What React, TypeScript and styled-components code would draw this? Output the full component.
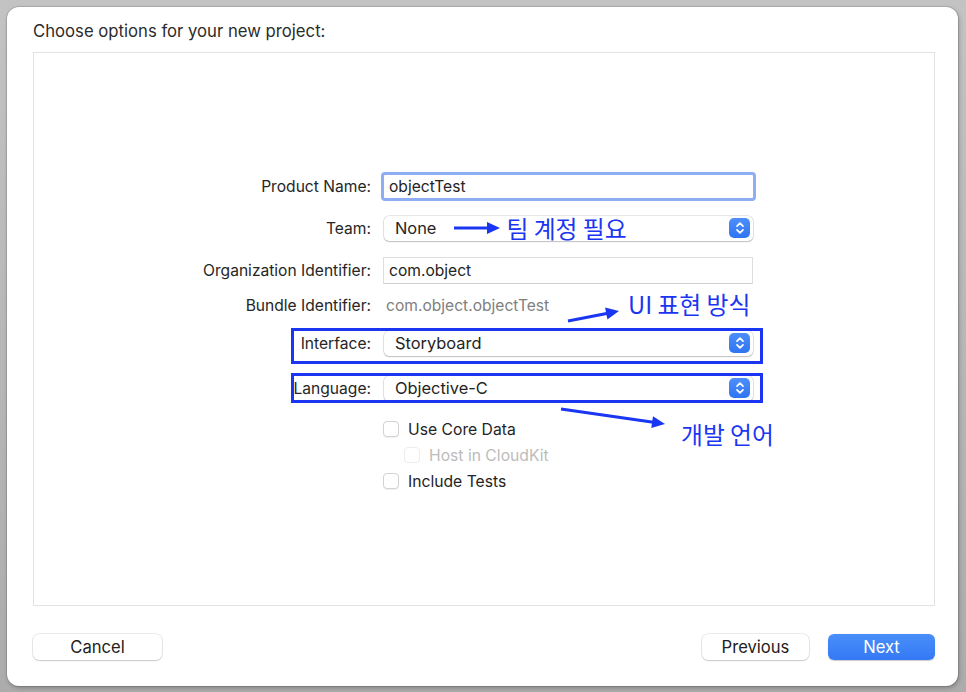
import React, { FC, ReactNode } from "react";
import styled, { createGlobalStyle } from "styled-components";

const colors = {
  backdrop: "#b9b9b9",
  window: "#ffffff",
  panelBorder: "#e3e3e3",
  text: "#242424",
  muted: "#808080",
  disabled: "#bcbcbc",
  accent: "#3d82f6",
  focus: "#8fadf2",
  note: "#1a36f2",
};

const GlobalStyle = createGlobalStyle`
  html, body {
    margin: 0;
    padding: 0;
    background: ${colors.backdrop};
  }
  body {
    font-family: Inter, "Liberation Sans", "Noto Sans CJK KR", sans-serif;
    color: ${colors.text};
    -webkit-font-smoothing: antialiased;
  }
`;

const Backdrop = styled.div`
  width: 966px;
  height: 692px;
  padding: 7px 8px 6px 7px;
  box-sizing: border-box;
  background: linear-gradient(#c3c3c3, #acacac);
`;

const Window = styled.div`
  width: 951px;
  height: 679px;
  box-sizing: border-box;
  background: ${colors.window};
  border-radius: 12px;
  box-shadow: 0 0 0 1px rgb(0 0 0 / 10%), 1px 2px 4px rgb(0 0 0 / 25%);
  padding: 14px 23px 0 26px;
  display: flex;
  flex-direction: column;
`;

const Title = styled.div`
  font-size: 16.7px;
  line-height: 20px;
  color: #2b2b2b;
  margin-bottom: 11px;
`;

const Panel = styled.div`
  height: 554px;
  box-sizing: border-box;
  border: 1px solid ${colors.panelBorder};
  padding-top: 117px;
`;

const Row = styled.div<{ $h: number; $mt?: number; $pb?: number; $boxed?: boolean }>`
  position: relative;
  display: grid;
  grid-template-columns: 337px 372px;
  column-gap: 12px;
  align-items: center;
  height: ${(p) => p.$h}px;
  margin-top: ${(p) => p.$mt ?? 0}px;
  padding-bottom: ${(p) => p.$pb ?? 0}px;
  box-sizing: border-box;

  &::before {
    content: "";
    display: ${(p) => (p.$boxed ? "block" : "none")};
    position: absolute;
    left: 257px;
    top: 0;
    width: 472px;
    height: 100%;
    box-sizing: border-box;
    border: 3px solid ${colors.note};
  }
`;

const Label = styled.div`
  text-align: right;
  font-size: 15.6px;
  color: #262626;
`;

const FocusField = styled.div`
  height: 29px;
  margin-left: -2px;
  width: 375px;
  box-sizing: border-box;
  border: 3px solid ${colors.focus};
  border-radius: 4px;
  background: #fff;
  display: flex;
  align-items: center;
  padding-left: 5px;
  font-size: 15.6px;
`;

const Field = styled.div`
  height: 27px;
  width: 370px;
  box-sizing: border-box;
  border: 1px solid #dedede;
  border-bottom-color: #cfcfcf;
  background: #fff;
  display: flex;
  align-items: center;
  padding-left: 5px;
  font-size: 15.6px;
`;

const Value = styled.div<{ $muted?: boolean }>`
  font-size: 15.6px;
  color: ${(p) => (p.$muted ? colors.muted : colors.text)};
  padding-left: 3px;
  display: flex;
  align-items: center;
`;

const PopupBox = styled.div`
  height: 25px;
  width: 369px;
  box-sizing: border-box;
  margin-left: 1px;
  border-radius: 5px;
  background: #fff;
  box-shadow: 0 0 0 0.5px rgb(0 0 0 / 18%), 0 1px 1.5px rgb(0 0 0 / 18%);
  display: flex;
  align-items: center;
  padding: 0 3px 0 11px;
  font-size: 16.4px;
`;

const PopupText = styled.div`
  flex: 1;
  display: flex;
  align-items: center;
  white-space: nowrap;
`;

const Stepper = styled.div`
  width: 21px;
  height: 20px;
  border-radius: 5px;
  background: linear-gradient(#4d8ff8, #2f74f2);
  display: flex;
  align-items: center;
  justify-content: center;
`;

const Popup: FC<{ children: ReactNode }> = ({ children }) => (
  <PopupBox>
    <PopupText>{children}</PopupText>
    <Stepper>
      <svg width="10" height="14" viewBox="0 0 10 14">
        <path
          d="M2 5.2 L5 2.2 L8 5.2 M2 8.8 L5 11.8 L8 8.8"
          fill="none"
          stroke="#fff"
          strokeWidth="1.7"
          strokeLinecap="round"
          strokeLinejoin="round"
        />
      </svg>
    </Stepper>
  </PopupBox>
);

const Check = styled.div<{ $indent?: number; $disabled?: boolean }>`
  display: flex;
  align-items: center;
  gap: 9px;
  margin-left: ${(p) => p.$indent ?? 0}px;
  font-size: 15.7px;
  color: ${(p) => (p.$disabled ? colors.disabled : colors.text)};

  span {
    width: 16px;
    height: 16px;
    box-sizing: border-box;
    border-radius: 4px;
    background: #fff;
    border: 1px solid ${(p) => (p.$disabled ? "#ececec" : "#d2d2d2")};
    box-shadow: ${(p) => (p.$disabled ? "none" : "0 1px 1px rgb(0 0 0 / 6%)")};
  }
`;

const Note = styled.span`
  font-family: "Noto Sans CJK KR", sans-serif;
  font-size: 23.8px;
  line-height: 28px;
  color: ${colors.note};
  white-space: nowrap;
`;

const FloatingNote = styled(Note)<{ $left: number; $top: number }>`
  position: absolute;
  left: ${(p) => p.$left}px;
  top: ${(p) => p.$top}px;
`;

const FloatingArrow = styled.svg<{ $left: number; $top: number }>`
  position: absolute;
  left: ${(p) => p.$left}px;
  top: ${(p) => p.$top}px;
  overflow: visible;
`;

const InlineArrow = styled.svg`
  margin: 0 6px 0 18px;
`;

const Footer = styled.div`
  display: flex;
  align-items: center;
  padding-top: 28px;
  gap: 19px;
`;

const Button = styled.div<{ $primary?: boolean; $w: number }>`
  width: ${(p) => p.$w}px;
  height: 26px;
  box-sizing: border-box;
  border-radius: 6px;
  display: flex;
  align-items: center;
  justify-content: center;
  font-size: 16.6px;
  color: ${(p) => (p.$primary ? "#fff" : "#222")};
  background: ${(p) =>
    p.$primary ? "linear-gradient(#4a8ef8, #3479f5)" : "#fff"};
  box-shadow: ${(p) =>
    p.$primary
      ? "0 0.5px 1px rgb(0 0 0 / 20%)"
      : "0 0 0 0.5px rgb(0 0 0 / 15%), 0 1px 1.5px rgb(0 0 0 / 15%)"};
`;

const Spacer = styled.div`
  flex: 1;
`;

const arrowHead = (x: number, y: number, angle: number) => {
  const len = 13;
  const half = 6;
  const cos = Math.cos(angle);
  const sin = Math.sin(angle);
  const bx = x - len * cos;
  const by = y - len * sin;
  return `${x},${y} ${bx - half * sin},${by + half * cos} ${bx + half * sin},${by - half * cos}`;
};

const Arrow: FC<{ x1: number; y1: number; x2: number; y2: number }> = ({ x1, y1, x2, y2 }) => {
  const a = Math.atan2(y2 - y1, x2 - x1);
  return (
    <>
      <line
        x1={x1}
        y1={y1}
        x2={x2 - 10 * Math.cos(a)}
        y2={y2 - 10 * Math.sin(a)}
        stroke={colors.note}
        strokeWidth="3"
      />
      <polygon points={arrowHead(x2, y2, a)} fill={colors.note} />
    </>
  );
};

const App: FC = () => (
  <>
    <GlobalStyle />
    <Backdrop>
      <Window>
        <Title>Choose options for your new project:</Title>
        <Panel>
          <Row $h={32}>
            <Label>Product Name:</Label>
            <FocusField>objectTest</FocusField>
          </Row>
          <Row $h={32} $mt={10}>
            <Label>Team:</Label>
            <Popup>
              None
              <InlineArrow width="46" height="14" viewBox="0 0 46 14">
                <Arrow x1={0} y1={7} x2={46} y2={7} />
              </InlineArrow>
              <Note>팀 계정 필요</Note>
            </Popup>
          </Row>
          <Row $h={32} $mt={10}>
            <Label>Organization Identifier:</Label>
            <Field>com.object</Field>
          </Row>
          <Row $h={30} $mt={4}>
            <Label>Bundle Identifier:</Label>
            <Value $muted>com.object.objectTest</Value>
            <FloatingArrow $left={534} $top={20} width="52" height="12" viewBox="0 0 52 12">
              <Arrow x1={0} y1={11} x2={51} y2={1} />
            </FloatingArrow>
            <FloatingNote $left={594} $top={0}>UI 표현 방식</FloatingNote>
          </Row>
          <Row $h={36} $mt={8} $pb={6} $boxed>
            <Label>Interface:</Label>
            <Popup>Storyboard</Popup>
          </Row>
          <Row $h={30} $mt={9} $boxed>
            <Label>Language:</Label>
            <Popup>Objective-C</Popup>
          </Row>
          <Row $h={26} $mt={13}>
            <div />
            <Check>
              <span />
              Use Core Data
            </Check>
            <FloatingArrow $left={527} $top={-7} width="105" height="16" viewBox="0 0 105 16">
              <Arrow x1={0} y1={0} x2={104} y2={15} />
            </FloatingArrow>
            <FloatingNote $left={647} $top={4}>개발 언어</FloatingNote>
          </Row>
          <Row $h={26}>
            <div />
            <Check $indent={21} $disabled>
              <span />
              Host in CloudKit
            </Check>
          </Row>
          <Row $h={26}>
            <div />
            <Check>
              <span />
              Include Tests
            </Check>
          </Row>
        </Panel>
        <Footer>
          <Button $w={129}>Cancel</Button>
          <Spacer />
          <Button $w={107}>Previous</Button>
          <Button $w={107} $primary>
            Next
          </Button>
        </Footer>
      </Window>
    </Backdrop>
  </>
);

export default App;
